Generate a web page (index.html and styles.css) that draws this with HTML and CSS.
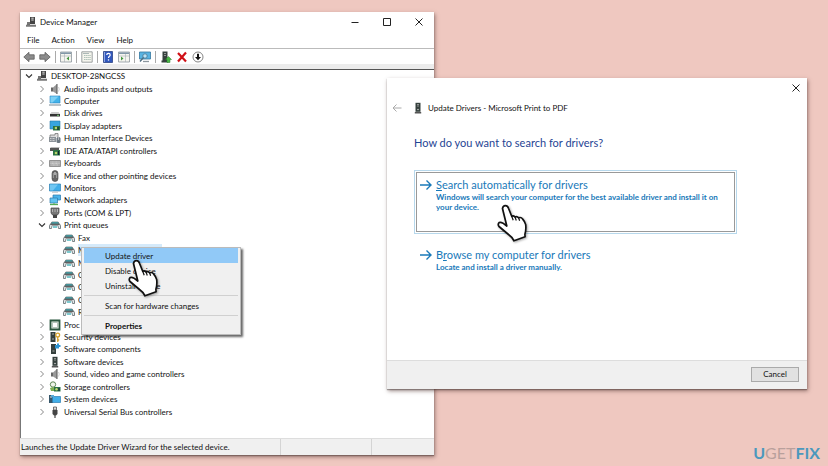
FILE: index.html
```html
<!DOCTYPE html>
<html lang="en">
<head>
<meta charset="utf-8">
<title>Device Manager</title>
<link rel="stylesheet" href="styles.css">
</head>
<body>
<svg class="sprite" aria-hidden="true">
  <symbol id="open" viewBox="0 0 8 8"><path d="M1 2.5l3 3 3-3" fill="none" stroke="#333" stroke-width="1.1"/></symbol>
  <symbol id="closed" viewBox="0 0 8 8"><path d="M2.5 1l3 3-3 3" fill="none" stroke="#888" stroke-width="1"/></symbol>
  <symbol id="pc" viewBox="0 0 12 12"><path d="M5 1h5v7H5z" fill="#444"/><path d="M6.3 2.2h2.4M6.3 4h2.4" stroke="#ddd"/><path d="M2 6h3v3H2z" fill="#777"/><path d="M1 9h10v2H1z" fill="#999"/><path d="M1 9.2h10" stroke="#555" stroke-width=".7"/></symbol>
  <symbol id="speaker" viewBox="0 0 12 12"><path d="M2 4.5h2v4H2z" fill="#666"/><path d="M4 4.5L8 1v10L4 8.5z" fill="#999"/><path d="M8 1v10" stroke="#555"/><path d="M9.5 4q1.5 2 0 4.500" fill="none" stroke="#bbb" stroke-width=".7"/></symbol>
  <symbol id="computer" viewBox="0 0 12 12"><path d="M1 1h10v7H1z" fill="#42b3ea" stroke="#2b82b8" stroke-width=".6"/><path d="M1.500 1.500h8l-6 6h-2z" fill="#7cd0f5"/><path d="M0 10h12" stroke="#8a9aa5" stroke-width="1.200"/></symbol>
  <symbol id="disk" viewBox="0 0 12 12"><path d="M2.500 5h7L11 7H1z" fill="#ccc"/><path d="M1 7h10v2.500H1z" fill="#333"/><path d="M8 8.300h2" stroke="#7c7"/></symbol>
  <symbol id="display" viewBox="0 0 12 12"><path d="M1 1h10v8H1z" fill="#38a5df" stroke="#2879a8" stroke-width=".6"/><path d="M4 6h7v4.500H4z" fill="#2c7344"/><circle cx="7" cy="8" r="1.300" fill="#b7d36a"/><path d="M9 7v3" stroke="#123"/></symbol>
  <symbol id="hid" viewBox="0 0 12 12"><path d="M1 5V3h5V1.500h3V5" fill="#ddd" stroke="#777" stroke-width=".8"/><path d="M0 5h7v5H0z" fill="#8b9298"/><path d="M1 6.500h5M1 8.500h5" stroke="#ddd" stroke-width=".8" stroke-dasharray="1 .5"/><rect x="7.500" y="5" width="4" height="6" rx="1.500" fill="#6d7880"/><path d="M9.500 5v3" stroke="#ddd" stroke-width=".6"/></symbol>
  <symbol id="ide" viewBox="0 0 12 12"><path d="M1 3h9v3H1z" fill="#555"/><path d="M1 3l1-1h8l1 1z" fill="#bbb"/><path d="M4 5h7v5.500H4z" fill="#2c7344"/><circle cx="7" cy="8" r="1.300" fill="#b7d36a"/><path d="M9.500 6v4" stroke="#123"/></symbol>
  <symbol id="keyboard" viewBox="0 0 12 12"><path d="M.5 3.500h11v6H.5z" fill="#aaa" stroke="#777" stroke-width=".7"/><path d="M1.500 5h9M1.500 6.500h9M2.500 8h7" stroke="#e4e4e4" stroke-width=".7" stroke-dasharray="1 .4"/></symbol>
  <symbol id="mouse" viewBox="0 0 12 12"><rect x="3" y=".5" width="6" height="11" rx="3" fill="#666" stroke="#444" stroke-width=".6"/><path d="M4.300 3v5M7.700 3v5" stroke="#bbb" stroke-width=".7"/><path d="M6 2v3" stroke="#eee"/></symbol>
  <symbol id="monitor" viewBox="0 0 12 12"><path d="M.5 2h11v7H.5z" fill="#42aee8" stroke="#2c7eb2" stroke-width=".7"/><path d="M1 2.500h8l-5 6H1z" fill="#71c7f2"/><path d="M3 10.300h6" stroke="#bbb" stroke-width=".8"/></symbol>
  <symbol id="network" viewBox="0 0 12 12"><path d="M4 1h7.500v5H4z" fill="#4bb4ea" stroke="#2878ae" stroke-width=".7"/><path d="M1 4h7.500v5H1z" fill="#62c3f0" stroke="#2878ae" stroke-width=".7"/><path d="M1 10.500h8" stroke="#57ad55" stroke-width="1.300"/><path d="M5 9v2" stroke="#57ad55"/></symbol>
  <symbol id="port" viewBox="0 0 12 12"><path d="M2 1h8v5l-1.500 2h-5L2 6z" fill="#777" stroke="#444" stroke-width=".7"/><path d="M3.500 2v3M6 2v3M8.500 2v3" stroke="#ccc" stroke-width=".7"/><path d="M4 8h4v3H4z" fill="#444"/></symbol>
  <symbol id="printer" viewBox="0 0 12 12"><path d="M2.800 3h6.400l1 2H1.800z" fill="#3bb0b8" stroke="#5a6468" stroke-width=".7"/><path d="M1.500 5h9l1 1.500v3H9.500L9 7H3l-.5 2.500h-2v-3z" fill="#e4e8ea" stroke="#5a6468" stroke-width=".8"/><path d="M1.500 5.700h9" stroke="#444" stroke-width=".9"/><path d="M3.500 7h5l.7 2.500H2.800z" fill="#fff"/><path d="M3.800 8h4.400" stroke="#25a2ab" stroke-width="1.200"/></symbol>
  <symbol id="cpu" viewBox="0 0 12 12"><path d="M1.500 1.500h9v9h-9z" fill="#e8efe8" stroke="#28563d" stroke-width="1.800"/><path d="M3.500 3.500h5v5h-5z" fill="#fff" stroke="#8da899" stroke-width=".6"/></symbol>
  <symbol id="security" viewBox="0 0 12 12"><path d="M1.500 1h5v10h-5z" fill="#35403d"/><path d="M3 3h2M3 8h2" stroke="#aaa"/><circle cx="8.700" cy="4" r="1.900" fill="none" stroke="#d6a12b" stroke-width="1.300"/><path d="M8.700 6v5M8.700 9h1.500" stroke="#d6a12b" stroke-width="1.300"/></symbol>
  <symbol id="component" viewBox="0 0 12 12"><path d="M2 1h5v10H2z" fill="#35403d"/><path d="M3.500 8h2" stroke="#aaa"/><path d="M6 2h2V.5h2V2h1.500v2H10v1.500H6z" fill="#2d93cf"/></symbol>
  <symbol id="tower" viewBox="0 0 12 12"><path d="M3.500.8h5v9h-5z" fill="#35403d"/><path d="M2.800 10h6.400v1.500H2.800z" fill="#555"/><path d="M5 2.500h2M5 4h2" stroke="#aaa" stroke-width=".8"/><circle cx="6" cy="7.500" r=".8" fill="#ccc"/></symbol>
  <symbol id="storage" viewBox="0 0 12 12"><circle cx="4" cy="3.500" r="2.700" fill="#eef3e8" stroke="#4e7a45" stroke-width=".9"/><path d="M1 7l3-1 2 1v3H2z" fill="#7cae51"/><path d="M5 6h6.500v4.500H5z" fill="#2c7344"/><circle cx="7.500" cy="8.300" r="1.200" fill="#c4d96f"/><path d="M10 7v3" stroke="#123"/></symbol>
  <symbol id="system" viewBox="0 0 12 12"><path d="M0 2h4v8H0z" fill="#36566a"/><path d="M1 4h2" stroke="#ddd"/><path d="M3.500 3.500h8v6h-8z" fill="#42aee8" stroke="#2c7eb2" stroke-width=".7"/><path d="M2 2h3v2H2z" fill="#57a9d6"/></symbol>
  <symbol id="usb" viewBox="0 0 12 12"><path d="M4.500 1h3v3h-3z" fill="#ddd" stroke="#555" stroke-width=".8"/><path d="M3.500 4h5v4L7 9.500H5L3.500 8z" fill="#444"/><path d="M6 9v3" stroke="#555" stroke-width="1.300"/></symbol>
  <symbol id="toolarrow" viewBox="0 0 12 12"><path d="M.8 6L6 1.300v2.500h5.200v4.400H6v2.500z" fill="#8c8c8c" stroke="#5d5d5d" stroke-width=".8"/></symbol>
  <symbol id="panel" viewBox="0 0 12 12"><path d="M.5 1h11v10H.5z" fill="#f5f5ef" stroke="#8b959c" stroke-width=".8"/><path d="M1 2.200h10" stroke="#8197a8" stroke-width="1.600"/><path d="M4.500 3v8M1 5h10" stroke="#a4adb3" stroke-width=".6"/><path d="M9 5.500v4L6.500 7.500z" fill="#43963e"/></symbol>
  <symbol id="sheet" viewBox="0 0 12 12"><path d="M.8.8h10.400v10.400H.8z" fill="#f5f5ee" stroke="#858c8b" stroke-width=".8"/><path d="M2 2.500h6" stroke="#9aa" stroke-width=".8"/><path d="M3 4.500h7M3 6.500h7M3 8.500h7" stroke="#9ab3a8" stroke-width=".8" stroke-dasharray="1.500 .6"/></symbol>
  <symbol id="hand" viewBox="0 0 32 40"><path d="M5.500 4.500Q6 1.700 8.300 1.700t3.200 2.600l3.200 8q1.600-1.200 3.300.7 2-1.200 3.600.8 2.600-1 4.100 1.300 2.300 2.600 3 5.500.6 5.500-.8 9.600l.2 2.600L17 36.800q-1.500-3.500-5.500-6.300L2 22.500Q.4 20 2.300 18.500q2.300-1 7.500 3.500z" fill="#fff" stroke="#111" stroke-width="1.700" stroke-linejoin="round"/><path d="M14.700 12.300l1.500 4M18 13l1.300 3.500M21.600 13.800l1 3" fill="none" stroke="#111" stroke-width="1.200"/></symbol>
  <symbol id="go" viewBox="0 0 12 12"><path d="M0 6h11M6.500 1.500L11 6l-4.500 4.500" fill="none" stroke="#1979b9" stroke-width="1.400"/></symbol>
  <symbol id="cross" viewBox="0 0 8 8"><path d="M.5.5l7 7m0-7l-7 7" fill="none" stroke="#222" stroke-width="1"/></symbol>
</svg>

<main class="desktop">
  <section class="window manager" aria-label="Device Manager">
    <header class="titlebar">
      <svg class="icon"><use href="#pc"/></svg>
      <h1>Device Manager</h1>
      <div class="controls">
        <button aria-label="Minimize"><svg viewBox="0 0 8 8"><path d="M.5 4.500h7" stroke="#222"/></svg></button>
        <button aria-label="Maximize"><svg viewBox="0 0 8 8"><path d="M.5.5h7v7h-7z" fill="none" stroke="#222"/></svg></button>
        <button aria-label="Close"><svg><use href="#cross"/></svg></button>
      </div>
    </header>
    <nav class="menubar"><button>File</button><button>Action</button><button>View</button><button>Help</button></nav>
    <div class="toolbar">
      <button aria-label="Back"><svg class="icon"><use href="#toolarrow"/></svg></button>
      <button aria-label="Forward"><svg class="icon flip"><use href="#toolarrow"/></svg></button>
      <i></i>
      <button aria-label="Show console tree"><svg class="icon"><use href="#panel"/></svg></button>
      <i></i>
      <button aria-label="Properties"><svg class="icon"><use href="#sheet"/></svg></button>
      <i></i>
      <button aria-label="Help"><svg class="icon" viewBox="0 0 12 12"><path d="M1.500.5h9v11h-9z" fill="#3157bd" stroke="#1c3579" stroke-width=".7"/><path d="M2.500 1v10" stroke="#8ea6e4"/><path d="M4.800 4q0-1.700 1.700-1.700T8.200 4q0 .9-1 1.500-.7.500-.7 1.500" fill="none" stroke="#fff" stroke-width="1.200"/><path d="M6.500 8.300v1.300" stroke="#fff" stroke-width="1.300"/></svg></button>
      <button aria-label="Action pane"><svg class="icon flip"><use href="#panel"/></svg></button>
      <i></i>
      <button aria-label="Scan for hardware changes"><svg class="icon" viewBox="0 0 12 12"><path d="M.5 1h11v7H.5z" fill="#58b3e2" stroke="#3577a0" stroke-width=".8"/><path d="M4 10.500h6" stroke="#8d979f" stroke-width="1.300"/><circle cx="6" cy="5" r="2.200" fill="#b9e3f7" stroke="#4a748e" stroke-width=".8"/><path d="M4.500 6.500L1 10.500" stroke="#4f6d80" stroke-width="1.300"/></svg></button>
      <i></i>
      <button aria-label="Update driver"><svg class="icon" viewBox="0 0 12 12"><path d="M2.500.5h5v9h-5zM1.500 9.500h7v2h-7z" fill="#35403d"/><path d="M4 2.500h2M4 4.500h2" stroke="#aaa" stroke-width=".8"/><path d="M8.500 5.500L11.500 8.500H10v3H7v-3H5.500z" fill="#49b946" stroke="#2b8029" stroke-width=".5"/></svg></button>
      <button aria-label="Uninstall device"><svg class="icon" viewBox="0 0 12 12"><path d="M2 2l8 8.500M10 1.500L2 10.500" stroke="#d01017" stroke-width="2.200"/></svg></button>
      <button aria-label="Disable device"><svg class="icon" viewBox="0 0 12 12"><circle cx="6" cy="6" r="5" fill="#fff" stroke="#777" stroke-width=".9"/><path d="M5 2.800h2V6h2L6 9.300 3 6h2z" fill="#111"/></svg></button>
    </div>
    <ul class="tree">
      <li><svg class="twist"><use href="#open"/></svg><svg class="icon"><use href="#pc"/></svg>DESKTOP-28NGCSS</li>
      <li class="l1"><svg class="twist"><use href="#closed"/></svg><svg class="icon"><use href="#speaker"/></svg>Audio inputs and outputs</li>
      <li class="l1"><svg class="twist"><use href="#closed"/></svg><svg class="icon"><use href="#computer"/></svg>Computer</li>
      <li class="l1"><svg class="twist"><use href="#closed"/></svg><svg class="icon"><use href="#disk"/></svg>Disk drives</li>
      <li class="l1"><svg class="twist"><use href="#closed"/></svg><svg class="icon"><use href="#display"/></svg>Display adapters</li>
      <li class="l1"><svg class="twist"><use href="#closed"/></svg><svg class="icon"><use href="#hid"/></svg>Human Interface Devices</li>
      <li class="l1"><svg class="twist"><use href="#closed"/></svg><svg class="icon"><use href="#ide"/></svg>IDE ATA/ATAPI controllers</li>
      <li class="l1"><svg class="twist"><use href="#closed"/></svg><svg class="icon"><use href="#keyboard"/></svg>Keyboards</li>
      <li class="l1"><svg class="twist"><use href="#closed"/></svg><svg class="icon"><use href="#mouse"/></svg>Mice and other pointing devices</li>
      <li class="l1"><svg class="twist"><use href="#closed"/></svg><svg class="icon"><use href="#monitor"/></svg>Monitors</li>
      <li class="l1"><svg class="twist"><use href="#closed"/></svg><svg class="icon"><use href="#network"/></svg>Network adapters</li>
      <li class="l1"><svg class="twist"><use href="#closed"/></svg><svg class="icon"><use href="#port"/></svg>Ports (COM &amp; LPT)</li>
      <li class="l1"><svg class="twist"><use href="#open"/></svg><svg class="icon"><use href="#printer"/></svg>Print queues</li>
      <li class="l2"><svg class="icon"><use href="#printer"/></svg>Fax</li>
      <li class="l2 selected"><svg class="icon"><use href="#printer"/></svg><span>M</span></li>
      <li class="l2"><svg class="icon"><use href="#printer"/></svg>M</li>
      <li class="l2"><svg class="icon"><use href="#printer"/></svg>O</li>
      <li class="l2"><svg class="icon"><use href="#printer"/></svg>O</li>
      <li class="l2"><svg class="icon"><use href="#printer"/></svg>O</li>
      <li class="l2"><svg class="icon"><use href="#printer"/></svg>R</li>
      <li class="l1"><svg class="twist"><use href="#closed"/></svg><svg class="icon"><use href="#cpu"/></svg>Proc</li>
      <li class="l1"><svg class="twist"><use href="#closed"/></svg><svg class="icon"><use href="#security"/></svg>Security devices</li>
      <li class="l1"><svg class="twist"><use href="#closed"/></svg><svg class="icon"><use href="#component"/></svg>Software components</li>
      <li class="l1"><svg class="twist"><use href="#closed"/></svg><svg class="icon"><use href="#tower"/></svg>Software devices</li>
      <li class="l1"><svg class="twist"><use href="#closed"/></svg><svg class="icon"><use href="#speaker"/></svg>Sound, video and game controllers</li>
      <li class="l1"><svg class="twist"><use href="#closed"/></svg><svg class="icon"><use href="#storage"/></svg>Storage controllers</li>
      <li class="l1"><svg class="twist"><use href="#closed"/></svg><svg class="icon"><use href="#system"/></svg>System devices</li>
      <li class="l1"><svg class="twist"><use href="#closed"/></svg><svg class="icon"><use href="#usb"/></svg>Universal Serial Bus controllers</li>
    </ul>
    <footer class="status"><span>Launches the Update Driver Wizard for the selected device.</span><span></span><span></span></footer>
  </section>

  <div class="context" role="menu">
    <button role="menuitem" class="active">Update driver</button>
    <button role="menuitem">Disable device</button>
    <button role="menuitem">Uninstall device</button>
    <hr>
    <button role="menuitem">Scan for hardware changes</button>
    <hr>
    <button role="menuitem"><b>Properties</b></button>
  </div>

  <section class="window dialog" aria-label="Update Drivers">
    <div class="close"><button aria-label="Close"><svg><use href="#cross"/></svg></button></div>
    <header class="wizard">
      <button aria-label="Back"><svg viewBox="0 0 10 8"><path d="M9.500 4H1M4.500.5L1 4l3.500 3.500" fill="none" stroke="#aaa"/></svg></button>
      <svg class="icon"><use href="#tower"/></svg>
      <span>Update Drivers - Microsoft Print to PDF</span>
    </header>
    <div class="content">
      <h2>How do you want to search for drivers?</h2>
      <button class="choice focused"><svg class="icon"><use href="#go"/></svg><span><strong><u>S</u>earch automatically for drivers</strong><small>Windows will search your computer for the best available driver and install it on your device.</small></span></button>
      <button class="choice"><svg class="icon"><use href="#go"/></svg><span><strong>B<u>r</u>owse my computer for drivers</strong><small>Locate and install a driver manually.</small></span></button>
    </div>
    <footer class="actions"><button>Cancel</button></footer>
  </section>

  <svg class="hand first" aria-hidden="true"><use href="#hand"/></svg>
  <svg class="hand second" aria-hidden="true"><use href="#hand"/></svg>
  <div class="brand"><b>U</b>GET<b>FIX</b></div>
</main>
</body>
</html>
```
FILE: styles.css
```css
* { box-sizing: border-box; }
body {
  margin: 0;
  background: #efc8c0;
  color: #111;
  font: 8px/12px Lato, "Open Sans", sans-serif;
}
button { margin: 0; padding: 0; border: 0; background: none; color: inherit; font: inherit; text-align: left; }
h1, h2, ul { margin: 0; padding: 0; font: inherit; }
svg { display: block; flex: none; }
.sprite { position: absolute; width: 0; height: 0; }
.icon { width: 12px; height: 12px; }
.flip { transform: scaleX(-1); }
.desktop { position: relative; min-height: 100vh; overflow: hidden; }
.window { position: absolute; display: flex; flex-direction: column; background: #fff; box-shadow: 1px 2px 4px #5c3f3c99, 0 1px 1px #0005; }
.manager { left: 20px; top: 12px; bottom: 11px; width: 50%; }
.titlebar { display: flex; align-items: center; gap: 3px; height: 20px; padding: 0 11px 0 5px; }
.controls { display: flex; gap: 24px; margin-left: auto; }
.controls svg, .close svg { width: 8px; height: 8px; }
.menubar { display: flex; align-items: center; gap: 12px; height: 17px; padding: 0 7px; border-bottom: 1px solid #bbb; }
.toolbar { display: flex; align-items: center; gap: 4px; height: 21px; padding: 0 3px 4px; border-bottom: 1px solid #555; background: linear-gradient(#fff 15px, #ececec 15px); }
.toolbar i { width: 1px; height: 12px; background: #aaa; }
.tree { flex: 1; display: flex; flex-direction: column; padding: 0 4px 20px; list-style: none; border-left: 1px solid #777; }
.tree li { flex: 1; display: flex; align-items: center; gap: 3px; min-height: 0; white-space: nowrap; }
.tree .l1 { padding-left: 13px; }
.tree .l2 { padding-left: 38px; }
.twist { width: 8px; height: 8px; }
.selected span { flex: none; width: 84px; background: #d5eafa; }
.status { display: flex; height: 17px; background: #f0f0f0; border-top: 1px solid #ddd; }
.status span { width: 22%; padding: 2px 1px; border-right: 1px solid #d4d4d4; white-space: nowrap; }
.status span:first-child { width: 63%; }
.status span:last-child { flex: 1; border: 0; }
.context { position: absolute; left: 81px; top: 247px; width: 160px; padding: 0 2px 1px; display: flex; flex-direction: column; background: #f0f0f0; border: 1px solid #bbb; box-shadow: 2px 2px 2px #0009; }
.context button { height: 15px; padding-left: 21px; white-space: nowrap; }
.context .active { background: #91c9f7; }
.context hr { width: 100%; margin: 2px 0; border: 0; border-top: 1px solid #d0d0d0; }
.dialog { left: 387px; right: 21px; top: 78px; bottom: 77px; }
.close { display: flex; justify-content: flex-end; padding: 6px 7px; }
.wizard { display: flex; align-items: center; gap: 4px; padding: 4px 5px; }
.wizard button { width: 16px; }
.wizard button svg { width: 10px; height: 8px; }
.content { flex: 1; padding: 17px 70px 0 27px; }
.content h2 { margin-bottom: 19px; color: #1f4594; font-size: 11px; line-height: 16px; }
.choice { display: flex; gap: 4px; width: 100%; padding: 7px 5px; border: 1px solid transparent; color: #1979b9; }
.choice .icon { margin-top: 1px; }
.choice strong { display: block; font-size: 11px; line-height: 14px; font-weight: 400; }
.choice small { display: block; font-size: 8px; line-height: 10px; font-weight: 700; }
.focused { height: 64px; margin-bottom: 6px; border: 1px solid #b7d8ec; box-shadow: inset 0 0 0 1px #fff, inset 0 0 0 2px #999; }
.actions { display: flex; justify-content: flex-end; align-items: center; height: 29px; padding: 0 8px 2px; background: #f0f0f0; border-top: 1px solid #ddd; }
.actions button { width: 48px; height: 15px; border: 1px solid #aaa; background: #e1e1e1; text-align: center; line-height: 13px; }
.hand { position: absolute; width: 32px; height: 40px; filter: drop-shadow(1px 1px 1px #0005); }
.first { left: 128px; top: 259px; }
.second { left: 497px; top: 204px; }
.brand { position: absolute; right: 8px; bottom: 4px; font-size: 16px; line-height: 18px; color: #b9a09c; }
.brand b { color: #4b98bd; font-weight: 700; }
```
